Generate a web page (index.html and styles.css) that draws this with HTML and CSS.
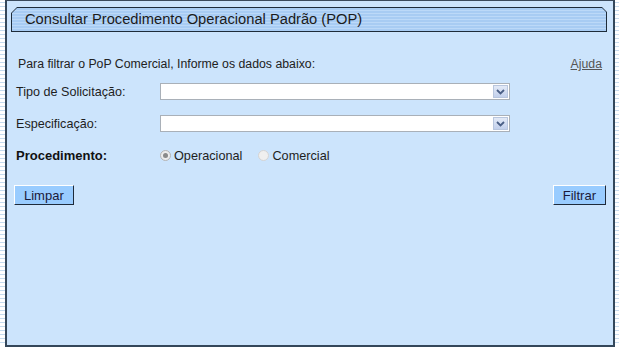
FILE: index.html
```html
<!DOCTYPE html>
<html lang="pt">
<head>
<meta charset="utf-8">
<title>Consultar POP</title>
<link rel="stylesheet" href="styles.css">
</head>
<body>
<div class="frame">
  <div class="stripe stripe-left"></div>
  <div class="panel">
    <div class="title-outer">
      <div class="title-inner">Consultar Procedimento Operacional Padrão (POP)</div>
    </div>
    <div class="intro">
      <span>Para filtrar o PoP Comercial, Informe os dados abaixo:</span>
      <a class="help" href="#">Ajuda</a>
    </div>
    <div class="row row-first">
      <span class="label">Tipo de Solicitação:</span>
      <div class="select"><span class="arrow"><svg width="9" height="6" viewBox="0 0 9 6"><path d="M1 1 L4.5 4.5 L8 1" fill="none" stroke="#4a5f86" stroke-width="1.8"/></svg></span></div>
    </div>
    <div class="row">
      <span class="label">Especificação:</span>
      <div class="select"><span class="arrow"><svg width="9" height="6" viewBox="0 0 9 6"><path d="M1 1 L4.5 4.5 L8 1" fill="none" stroke="#4a5f86" stroke-width="1.8"/></svg></span></div>
    </div>
    <div class="row">
      <span class="label label-bold">Procedimento:</span>
      <div class="radios">
        <span class="radio checked"></span><span class="radio-text">Operacional</span>
        <span class="radio radio-second"></span><span class="radio-text">Comercial</span>
      </div>
    </div>
    <div class="buttons">
      <button class="btn">Limpar</button>
      <button class="btn">Filtrar</button>
    </div>
  </div>
  <div class="stripe stripe-right"></div>
</div>
</body>
</html>
```

FILE: styles.css
```css
html, body {
  margin: 0;
  padding: 0;
  background: #ffffff;
}
body {
  width: 623px;
  height: 352px;
  overflow: hidden;
  font-family: "Liberation Sans", Arial, sans-serif;
  color: #1e1e1e;
}
.frame {
  display: flex;
  height: 347px;
}
.stripe {
  height: 345px;
}
.stripe-left {
  width: 5px;
  background: repeating-linear-gradient(to bottom, #ffffff 0 2px, #c4dbef 2px 3px, #ffffff 3px 4px);
}
.stripe-right {
  width: 8px;
  background: repeating-linear-gradient(to bottom, #ffffff 0 2px, #c9dcee 2px 3px, #ffffff 3px 4px);
  background-size: 4px 100%;
  background-repeat: no-repeat;
}
.panel {
  flex: 1;
  background: #cce4fc;
  border-top: 1px solid #3a4a5c;
  border-left: 2px solid #34475a;
  border-right: 2px solid #34475a;
  border-bottom: 2px solid #34475a;
  display: flex;
  flex-direction: column;
}
.title-outer {
  margin: 6px 0 0 4px;
  width: 596px;
  height: 25px;
  background: #1e2c3a;
  clip-path: polygon(6px 0, calc(100% - 5px) 0, 100% 5px, 100% 100%, 0 100%, 0 6px);
  display: flex;
}
.title-inner {
  margin: 1px;
  flex: 1;
  background: repeating-linear-gradient(to bottom, #a8ccf3 0 2px, #bcd9f8 2px 3px);
  clip-path: polygon(5px 0, calc(100% - 4px) 0, 100% 4px, 100% 100%, 0 100%, 0 5px);
  font-size: 14.7px;
  line-height: 23px;
  padding-left: 13px;
  color: #1b1b1b;
}
.intro {
  margin-top: 25px;
  padding: 0 11px 0 11px;
  display: flex;
  justify-content: space-between;
  font-size: 12.3px;
  line-height: 14px;
  color: #222;
}
.help {
  color: #555;
  text-decoration: underline;
}
.row {
  display: flex;
  align-items: center;
  padding-left: 9px;
  height: 17px;
  margin-top: 15px;
}
.row-first {
  margin-top: 12px;
}
.label {
  width: 144px;
  font-size: 12.6px;
}
.label-bold {
  font-weight: bold;
  font-size: 13px;
  color: #111;
}
.select {
  box-sizing: border-box;
  width: 350px;
  height: 17px;
  background: #fff;
  border: 1px solid #a9b0b8;
  display: flex;
  justify-content: flex-end;
  align-items: center;
  padding-right: 1px;
}
.arrow {
  box-sizing: border-box;
  width: 15px;
  height: 13px;
  border: 1px solid #b8c6de;
  background: linear-gradient(to bottom, #e3eaf7, #c2d0ec);
  display: flex;
  align-items: center;
  justify-content: center;
}
.radios {
  display: flex;
  align-items: center;
  font-size: 12.7px;
  color: #1e1e1e;
}
.radio {
  box-sizing: border-box;
  width: 11px;
  height: 11px;
  border-radius: 50%;
  border: 1px solid #b4b4b4;
  background: #ececec;
  margin-right: 3px;
  display: flex;
  align-items: center;
  justify-content: center;
}
.radio.checked::after {
  content: "";
  width: 5px;
  height: 5px;
  border-radius: 50%;
  background: #8a8a8a;
}
.radio-second {
  margin-left: 16px;
  border-color: #d4d4d4;
  background: #efefef;
}
.buttons {
  margin-top: 21px;
  padding: 0 7px 0 7px;
  display: flex;
  justify-content: space-between;
}
.btn {
  font-family: "Liberation Sans", Arial, sans-serif;
  font-size: 13px;
  color: #1a1a3a;
  background: #99ccff;
  height: 20px;
  padding: 0 9px;
  border-top: 1px solid #ffffff;
  border-left: 1px solid #ffffff;
  border-right: 1px solid #1e2a3a;
  border-bottom: 1px solid #1e2a3a;
  border-radius: 0;
  line-height: 17px;
}
```
